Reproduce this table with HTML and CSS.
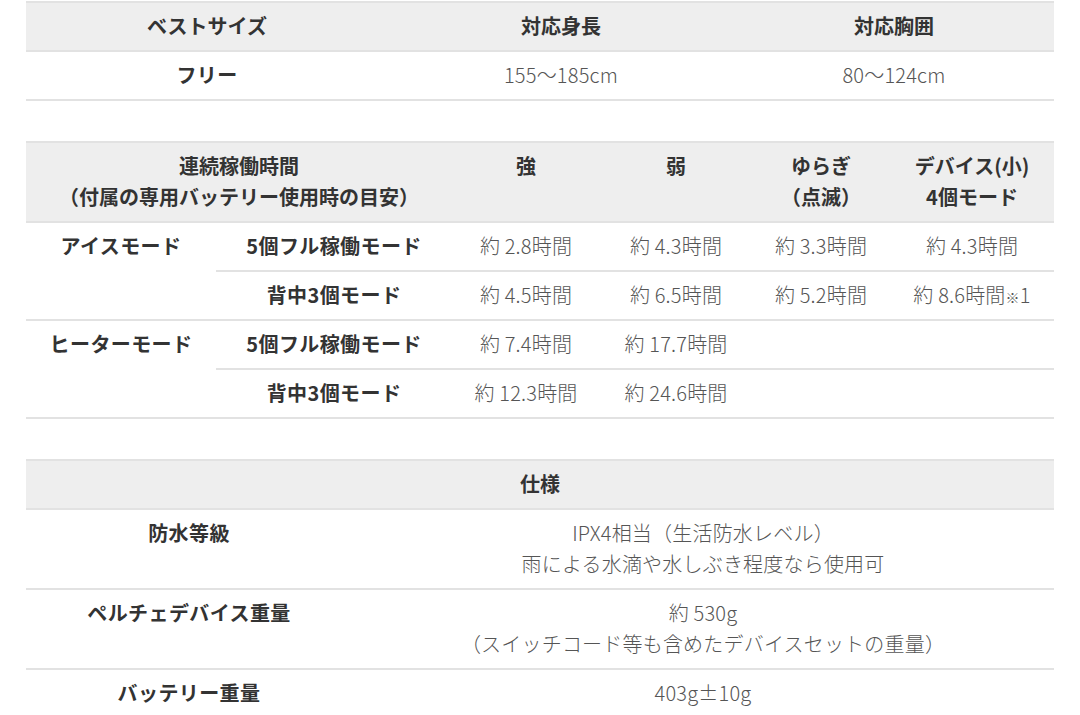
FILE: index.html
```html
<!DOCTYPE html>
<html lang="ja">
<head>
<meta charset="utf-8">
<link rel="stylesheet" href="styles.css">
</head>
<body>
<div class="page">
  <table class="spec t1">
    <colgroup><col class="c1a"><col class="c1b"><col class="c1c"></colgroup>
    <thead>
      <tr><th>ベストサイズ</th><th>対応身長</th><th>対応胸囲</th></tr>
    </thead>
    <tbody>
      <tr><th>フリー</th><td>155〜185cm</td><td>80〜124cm</td></tr>
    </tbody>
  </table>

  <table class="spec t2">
    <colgroup><col class="c2a"><col class="c2b"><col class="c2c"><col class="c2d"><col class="c2e"><col class="c2f"></colgroup>
    <thead>
      <tr>
        <th colspan="2">連続稼働時間<br>（付属の専用バッテリー使用時の目安）</th>
        <th class="top">強</th>
        <th class="top">弱</th>
        <th>ゆらぎ<br>（点滅）</th>
        <th>デバイス(小)<br>4個モード</th>
      </tr>
    </thead>
    <tbody>
      <tr class="sub">
        <th rowspan="2" class="mode">アイスモード</th>
        <th>5個フル稼働モード</th>
        <td>約 2.8時間</td><td>約 4.3時間</td><td>約 3.3時間</td><td>約 4.3時間</td>
      </tr>
      <tr>
        <th>背中3個モード</th>
        <td>約 4.5時間</td><td>約 6.5時間</td><td>約 5.2時間</td><td>約 8.6時間<span class="note">※</span>1</td>
      </tr>
      <tr class="sub">
        <th rowspan="2" class="mode">ヒーターモード</th>
        <th>5個フル稼働モード</th>
        <td>約 7.4時間</td><td>約 17.7時間</td><td></td><td></td>
      </tr>
      <tr>
        <th>背中3個モード</th>
        <td>約 12.3時間</td><td>約 24.6時間</td><td></td><td></td>
      </tr>
    </tbody>
  </table>

  <table class="spec t3">
    <colgroup><col class="c3a"><col class="c3b"></colgroup>
    <thead>
      <tr><th colspan="2">仕様</th></tr>
    </thead>
    <tbody>
      <tr><th class="top">防水等級</th><td>IPX4相当（生活防水レベル）<br>雨による水滴や水しぶき程度なら使用可</td></tr>
      <tr><th class="top">ペルチェデバイス重量</th><td>約 530g<br>（スイッチコード等も含めたデバイスセットの重量）</td></tr>
      <tr><th class="top">バッテリー重量</th><td>403g±10g</td></tr>
    </tbody>
  </table>
</div>
</body>
</html>
```

FILE: styles.css
```css
html, body {
  margin: 0;
  padding: 0;
  background: #ffffff;
}

body {
  font-family: "Noto Sans CJK JP", "Noto Sans", sans-serif;
  font-size: 20px;
  line-height: 31px;
  color: #333333;
}

.page {
  padding: 1px 26px 0 26px;
  display: flex;
  flex-direction: column;
  gap: 40px;
}

.spec {
  width: 100%;
  border-collapse: collapse;
  table-layout: fixed;
}

.spec th,
.spec td {
  height: 31px;
  padding: 7px 0 9px 0;
  text-align: center;
  vertical-align: middle;
  border-bottom: 2px solid #e2e2e2;
}

.spec thead th {
  background: #eeeeee;
  border-top: 2px solid #e2e2e2;
  font-weight: 700;
  color: #333333;
}

.spec tbody th {
  font-weight: 700;
  color: #333333;
  letter-spacing: 0.4px;
}

.spec td {
  font-weight: 300;
  color: #555555;
  letter-spacing: 0.2px;
}

.spec th.top {
  vertical-align: top;
}

.spec .mode {
  vertical-align: top;
}

.note {
  font-size: 14px;
  line-height: 0;
}

.c1a { width: 362px; }
.c1b { width: 346px; }

.c2a { width: 190px; }
.c2b { width: 236px; }
.c2c { width: 148px; }
.c2d { width: 152px; }
.c2e { width: 138px; }

.c3a { width: 326px; }
```
